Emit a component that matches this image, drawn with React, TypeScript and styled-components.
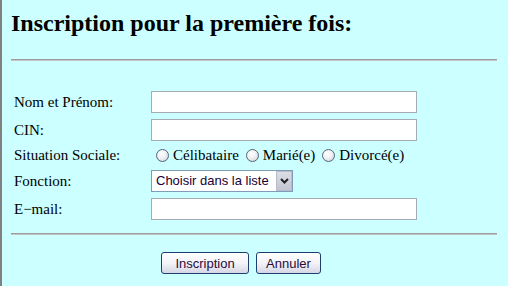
import React from "react";
import styled, { createGlobalStyle } from "styled-components";

const GlobalStyle = createGlobalStyle`
  html, body {
    margin: 0;
    padding: 0;
    background: #ccffff;
  }
  body {
    font-family: "Liberation Serif", "Times New Roman", serif;
    color: #000;
  }
`;

const Page = styled.div`
  min-height: 286px;
  box-sizing: border-box;
  border-left: 2px solid #808080;
  padding: 0 11px 0 9px;
`;

const Title = styled.h1`
  margin: 0;
  padding-top: 11px;
  font-size: 24px;
  line-height: 24px;
  font-weight: bold;
`;

const Rule = styled.hr<{ $top: number; $bottom: number }>`
  margin: ${(p) => p.$top}px 0 ${(p) => p.$bottom}px;
  border: 0;
  border-top: 1px solid #9c9c9c;
  border-bottom: 1px solid #c4c4c4;
  height: 0;
`;

const FormGrid = styled.div`
  display: grid;
  grid-template-columns: 137px 1fr;
  row-gap: 6px;
  padding-left: 3px;
`;

const Label = styled.label`
  display: flex;
  align-items: center;
  font-size: 15px;
  height: 22px;
`;

const RadioLabel = styled(Label)`
  height: 17px;
`;

const TextInput = styled.input`
  box-sizing: border-box;
  width: 266px;
  height: 22px;
  margin: 0;
  border: 1px solid #a5acb2;
  background: #fff;
  outline: none;
`;

const RadioGroup = styled.div`
  display: flex;
  align-items: center;
  height: 17px;
  padding-left: 5px;
  font-size: 15px;
`;

const RadioOption = styled.label`
  display: flex;
  align-items: center;
  margin-right: 7px;
`;

const RadioDot = styled.span`
  width: 11px;
  height: 11px;
  margin-right: 4px;
  border-radius: 50%;
  border: 1px solid #55657c;
  background: radial-gradient(circle at 40% 35%, #fff 0%, #eef0f2 45%, #c9ccd3 100%);
`;

const SelectBox = styled.div`
  box-sizing: border-box;
  display: flex;
  width: 142px;
  height: 22px;
  border: 1px solid #7f9db9;
  background: #fff;
`;

const SelectText = styled.span`
  flex: 1;
  padding-left: 4px;
  font-family: "Liberation Sans", Arial, sans-serif;
  font-size: 13px;
  line-height: 20px;
  color: #1a0033;
  white-space: nowrap;
  overflow: hidden;
`;

const SelectArrow = styled.span`
  box-sizing: border-box;
  width: 16px;
  height: 20px;
  display: flex;
  align-items: center;
  justify-content: center;
  border: 1px solid #b8bcc8;
  background: linear-gradient(#dcdee6, #c2c5d2);
`;

const Actions = styled.div`
  display: flex;
  gap: 7px;
  padding-left: 150px;
`;

const Button = styled.button<{ $width: number }>`
  box-sizing: border-box;
  width: ${(p) => p.$width}px;
  height: 22px;
  padding: 0;
  font-family: "Liberation Sans", Arial, sans-serif;
  font-size: 13px;
  color: #2a0a3a;
  border: 1px solid #1c3f6e;
  border-radius: 3px;
  background: linear-gradient(#ffffff 0%, #f3f3f8 50%, #d6d6e6 100%);
`;

const fields = [
  { label: "Nom et Prénom:" },
  { label: "CIN:" },
];

export default function App() {
  return (
    <>
      <GlobalStyle />
      <Page>
        <Title>Inscription pour la première fois:</Title>
        <Rule $top={24} $bottom={30} />
        <FormGrid>
          {fields.map((f) => (
            <React.Fragment key={f.label}>
              <Label>{f.label}</Label>
              <TextInput type="text" />
            </React.Fragment>
          ))}
          <RadioLabel>Situation Sociale:</RadioLabel>
          <RadioGroup>
            {["Célibataire", "Marié(e)", "Divorcé(e)"].map((opt) => (
              <RadioOption key={opt}>
                <RadioDot />
                {opt}
              </RadioOption>
            ))}
          </RadioGroup>
          <Label>Fonction:</Label>
          <SelectBox>
            <SelectText>Choisir dans la liste</SelectText>
            <SelectArrow>
              <svg width="9" height="6" viewBox="0 0 9 6">
                <path d="M1 1 L4.5 4.5 L8 1" fill="none" stroke="#222" strokeWidth="2" />
              </svg>
            </SelectArrow>
          </SelectBox>
          <Label>E−mail:</Label>
          <TextInput type="text" />
        </FormGrid>
        <Rule $top={13} $bottom={17} />
        <Actions>
          <Button $width={88}>Inscription</Button>
          <Button $width={65}>Annuler</Button>
        </Actions>
      </Page>
    </>
  );
}
